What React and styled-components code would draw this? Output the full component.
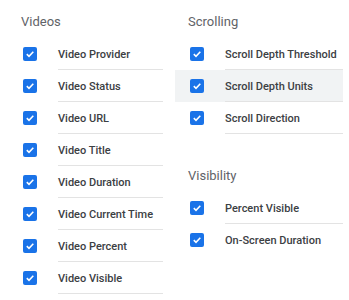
import React from 'react';
import styled, { createGlobalStyle } from 'styled-components';

const GlobalStyle = createGlobalStyle`
  body {
    margin: 0;
    background: #fff;
    font-family: Roboto, "Liberation Sans", sans-serif;
  }
`;

const Page = styled.div`
  display: flex;
  gap: 12px;
  padding-left: 8px;
  width: 349px;
  height: 300px;
  box-sizing: border-box;
  overflow: hidden;
`;

const Column = styled.div`
  display: flex;
  flex-direction: column;
  gap: 20px;
  width: ${({ width }) => width}px;
`;

const Section = styled.div`
  display: flex;
  flex-direction: column;
`;

const Heading = styled.div`
  height: 38px;
  padding: 14px 0 0 13px;
  box-sizing: border-box;
  font-size: 13px;
  line-height: 16px;
  color: #5f6368;
`;

const Row = styled.div`
  display: flex;
  align-items: center;
  height: 32px;
  padding-left: 15px;
  background: ${({ active }) => (active ? '#f1f3f4' : 'transparent')};
`;

const Box = styled.span`
  flex: none;
  width: 14px;
  height: 14px;
  border-radius: 2px;
  background: #1a73e8;
  display: flex;
  align-items: center;
  justify-content: center;
`;

const Label = styled.div`
  align-self: stretch;
  flex: 1;
  margin-left: 21px;
  display: flex;
  align-items: center;
  font-size: 11px;
  font-weight: 500;
  color: #3c4043;
  white-space: nowrap;
  border-bottom: ${({ last }) => (last ? 'none' : '1px solid #e3e3e3')};
  box-sizing: border-box;
  padding-top: 1px;
`;

function Check() {
  return (
    <Box>
      <svg width="10" height="10" viewBox="0 0 10 10">
        <path d="M1.8 5.2 L4 7.3 L8.3 2.8" fill="none" stroke="#fff" strokeWidth="1.6" />
      </svg>
    </Box>
  );
}

function Group({ title, items, active, noLastLine }) {
  return (
    <Section>
      <Heading>{title}</Heading>
      {items.map((it, i) => (
        <Row key={it} active={active === i}>
          <Check />
          <Label last={noLastLine && i === items.length - 1}>{it}</Label>
        </Row>
      ))}
    </Section>
  );
}

export default function App() {
  return (
    <>
      <GlobalStyle />
      <Page>
        <Column width={155}>
          <Group
            title="Videos"
            items={[
              'Video Provider',
              'Video Status',
              'Video URL',
              'Video Title',
              'Video Duration',
              'Video Current Time',
              'Video Percent',
              'Video Visible',
            ]}
          />
        </Column>
        <Column width={168}>
          <Group
            title="Scrolling"
            active={1}
            items={['Scroll Depth Threshold', 'Scroll Depth Units', 'Scroll Direction']}
          />
          <Group
            title="Visibility"
            noLastLine
            items={['Percent Visible', 'On-Screen Duration']}
          />
        </Column>
      </Page>
    </>
  );
}
